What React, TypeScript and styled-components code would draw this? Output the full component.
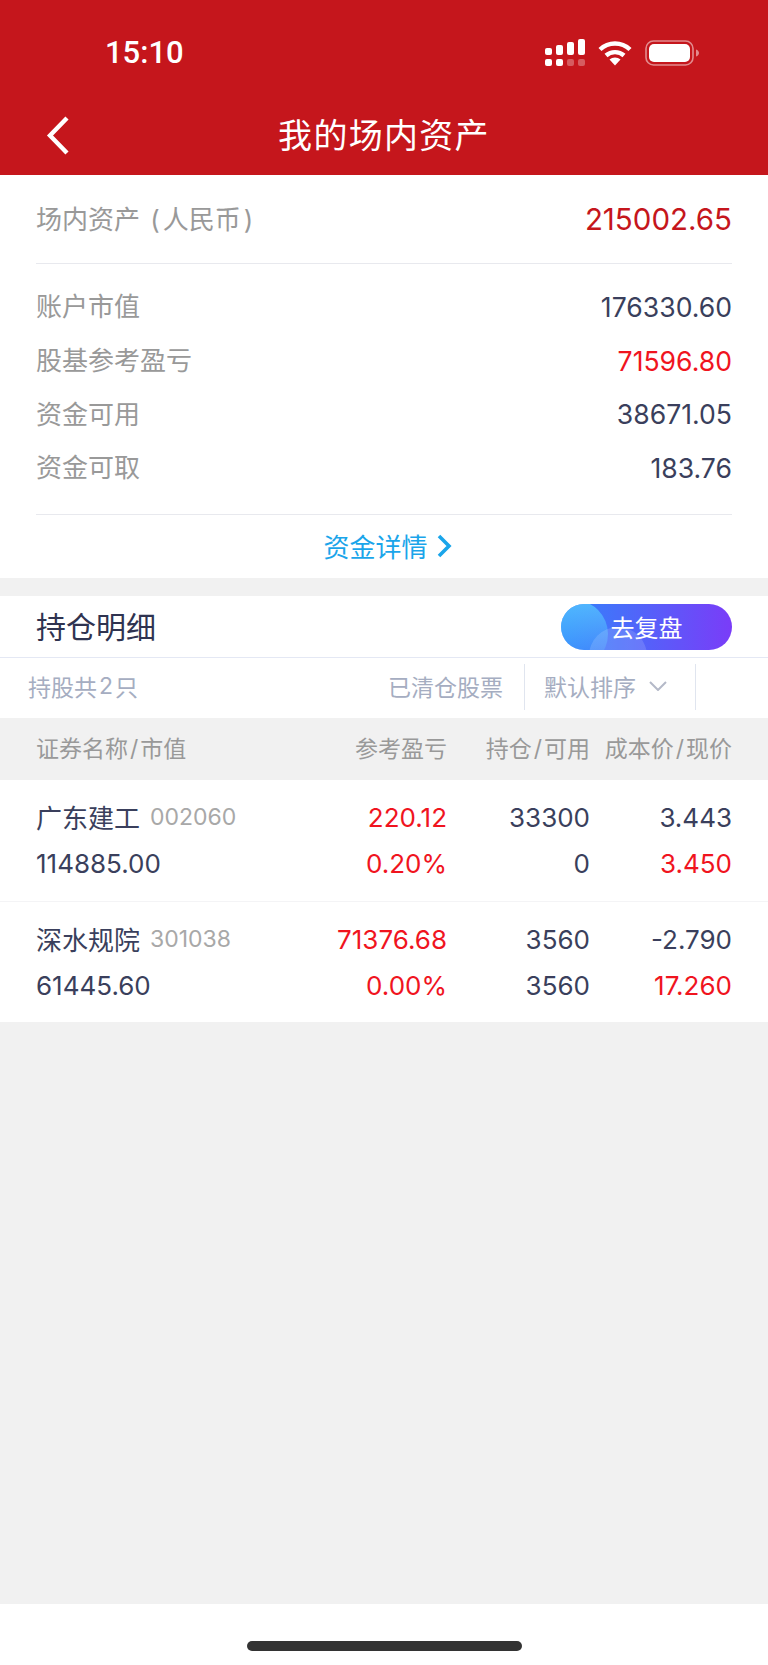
import React from 'react';
import styled, { createGlobalStyle } from 'styled-components';

const red = '#c5161c';
const rise = '#f0141e';
const ink = '#3a3f5c';
const muted = '#999999';
const hairline = '#e8e9ee';

const GlobalStyle = createGlobalStyle`
  html, body {
    margin: 0;
    padding: 0;
    background: #f1f1f1;
  }
  body {
    font-family: Inter, "Noto Sans CJK SC", sans-serif;
    -webkit-font-smoothing: antialiased;
  }
  * {
    box-sizing: border-box;
  }
`;

const Page = styled.div`
  width: 768px;
  height: 1665px;
  display: flex;
  flex-direction: column;
  background: #f1f1f1;
`;

const Header = styled.header`
  height: 175px;
  background: ${red};
  color: #fff;
  display: flex;
  flex-direction: column;
`;

const StatusBar = styled.div`
  height: 96px;
  padding: 9px 68px 0 105px;
  display: flex;
  align-items: center;
  justify-content: space-between;
`;

const Clock = styled.span`
  font-family: Roboto, sans-serif;
  font-size: 31px;
  font-weight: 500;
`;

const StatusIcons = styled.div`
  display: flex;
  align-items: center;
  gap: 13px;
`;

const NavBar = styled.div`
  flex: 1;
  position: relative;
  display: flex;
  align-items: center;
  justify-content: center;
  padding-bottom: 4px;
`;

const BackIcon = styled.svg`
  position: absolute;
  left: 45px;
  top: 19px;
`;

const NavTitle = styled.h1`
  margin: 0;
  font-size: 34px;
  font-weight: 400;
  letter-spacing: 1.3px;
`;

const Summary = styled.section`
  background: #fff;
  padding: 0 36px;
  height: 403px;
  display: flex;
  flex-direction: column;
`;

const TotalRow = styled.div`
  height: 89px;
  border-bottom: 1px solid ${hairline};
  display: flex;
  align-items: center;
  justify-content: space-between;
  font-size: 26px;
  color: ${muted};
`;

// CJK glyphs sit low in their line box, so labels get a little bottom padding
const RowLabel = styled.span`
  padding-bottom: 4px;
`;

const Paren = styled.span`
  margin: 0 3px;
`;

const TotalValue = styled.span`
  font-size: 29.5px;
  color: ${red};
`;

const Metrics = styled.div`
  height: 251px;
  border-bottom: 1px solid ${hairline};
  padding-top: 16px;
  display: flex;
  flex-direction: column;
`;

const MetricRow = styled.div`
  height: 53.7px;
  display: flex;
  align-items: center;
  justify-content: space-between;
  font-size: 26px;
  color: ${muted};
`;

const MetricValue = styled.span<{ $up?: boolean }>`
  font-size: 26.6px;
  color: ${(p) => (p.$up ? rise : ink)};
`;

const DetailLink = styled.a`
  flex: 1;
  display: flex;
  align-items: center;
  justify-content: center;
  gap: 8px;
  font-size: 26px;
  color: #1aa5ea;
  padding: 0 0 2px 7px;
`;

const Holdings = styled.section`
  margin-top: 18px;
  background: #fff;
`;

const HoldingsHead = styled.div`
  height: 62px;
  padding: 0 36px;
  border-bottom: 1px solid #e4e8f4;
  display: flex;
  align-items: center;
  justify-content: space-between;
`;

const HoldingsTitle = styled.h2`
  margin: 0;
  padding-bottom: 3px;
  font-size: 30px;
  font-weight: 400;
  color: #2f3350;
`;

const ReviewButton = styled.button`
  position: relative;
  overflow: hidden;
  width: 171px;
  height: 46px;
  padding: 0;
  border: 0;
  border-radius: 23px;
  background: linear-gradient(90deg, #2f86fb 0%, #7a3cf8 100%);
  color: #fff;
  font: inherit;
  font-size: 24px;

  &::before,
  &::after {
    content: '';
    position: absolute;
    border-radius: 50%;
  }
  &::before {
    left: -21px;
    top: -4px;
    width: 68px;
    height: 68px;
    background: linear-gradient(180deg, rgba(88, 200, 255, 0.8), rgba(60, 130, 255, 0.15));
  }
  &::after {
    left: 28px;
    top: 23px;
    width: 58px;
    height: 58px;
    background: rgba(255, 255, 255, 0.14);
  }
`;

const ReviewLabel = styled.span`
  position: relative;
  z-index: 1;
`;

const Toolbar = styled.div`
  height: 60px;
  padding: 6px 0 8px 28px;
  display: flex;
  align-items: stretch;
  font-size: 23px;
  color: #a5adc1;
`;

const ToolbarCount = styled.span`
  flex: 1;
  display: flex;
  align-items: center;
  padding-bottom: 2px;
`;

const CountNumber = styled.span`
  margin: 0 2px;
`;

const ToolbarLink = styled.span`
  display: flex;
  align-items: center;
  padding: 0 21px 2px 0;
`;

const SortControl = styled.span`
  width: 172px;
  margin-right: 72px;
  padding: 0 0 2px 19px;
  border-left: 1px solid #e0e5ef;
  border-right: 1px solid #e0e5ef;
  display: flex;
  align-items: center;
  gap: 13px;
`;

const TableGrid = styled.div`
  display: grid;
  grid-template-columns: 1fr 120px 143px 142px;
  padding: 0 36px;
`;

const TableHead = styled(TableGrid)`
  height: 62px;
  background: #f1f1f1;
  align-items: center;
  font-size: 23px;
  color: ${muted};
`;

const HeadCell = styled.span<{ $left?: boolean }>`
  padding-bottom: 4px;
  text-align: ${(p) => (p.$left ? 'left' : 'right')};
  white-space: nowrap;
`;

const Slash = styled.span`
  margin: 0 2px;
`;

const Rows = styled.div`
  background: #fff;
`;

const StockRow = styled(TableGrid)`
  height: 121px;
  padding-top: 14px;
  grid-auto-rows: 46.5px;
  align-items: center;
  font-size: 26px;
  color: ${ink};

  & + & {
    border-top: 1px solid #f4f4f6;
  }
`;

const NameCell = styled.span`
  display: flex;
  align-items: center;
  gap: 10px;
  white-space: nowrap;
`;

const StockName = styled.span`
  padding-bottom: 2px;
`;

const StockCode = styled.span`
  font-size: 23px;
  color: #a8a8a8;
`;

const NumCell = styled.span<{ $up?: boolean }>`
  text-align: right;
  color: ${(p) => (p.$up ? rise : 'inherit')};
`;

const Spacer = styled.div`
  flex: 1;
`;

const HomeBar = styled.footer`
  height: 61px;
  background: #fff;
  display: flex;
  justify-content: center;
  padding-top: 37px;
`;

const HomeIndicator = styled.div`
  width: 275px;
  height: 10px;
  border-radius: 5px;
  background: #333;
`;

const SignalIcon = () => (
  <svg width="40" height="28" viewBox="0 0 40 28" fill="#fff">
    <rect x="0" y="9" width="7" height="7" rx="2" />
    <rect x="11" y="6" width="7" height="10" rx="2" />
    <rect x="22" y="3" width="7" height="13" rx="2" />
    <rect x="33" y="0" width="7" height="16" rx="2" />
    <rect x="0" y="20" width="7" height="7" rx="2" />
    <rect x="11" y="20" width="7" height="7" rx="2" />
    <rect x="22" y="20" width="7" height="7" rx="2" opacity="0.3" />
    <rect x="33" y="20" width="7" height="7" rx="2" opacity="0.3" />
  </svg>
);

const WifiIcon = () => (
  <svg width="34" height="26" viewBox="0 0 34 26" fill="none" stroke="#fff" strokeWidth="4.4">
    <path d="M2 9.5C10.5 1.5 23.5 1.5 32 9.5" />
    <path d="M8 15.5C13 11 21 11 26 15.5" />
    <path d="M11.5 19.6 17 25.4 22.5 19.6C19.5 16.8 14.5 16.8 11.5 19.6Z" fill="#fff" stroke="none" />
  </svg>
);

const BatteryIcon = () => (
  <svg width="55" height="26" viewBox="0 0 55 26" fill="none">
    <rect x="1" y="1" width="47" height="24" rx="7.5" stroke="#fff" strokeOpacity="0.5" strokeWidth="1.6" />
    <rect x="4" y="4" width="41" height="18" rx="5" fill="#fff" />
    <path d="M51 9.5c2 .6 3 2 3 3.5s-1 2.9-3 3.5z" fill="#fff" fillOpacity="0.5" />
  </svg>
);

const metrics = [
  { label: '账户市值', value: '176330.60' },
  { label: '股基参考盈亏', value: '71596.80', up: true },
  { label: '资金可用', value: '38671.05' },
  { label: '资金可取', value: '183.76' },
];

const stocks = [
  {
    name: '广东建工',
    code: '002060',
    marketValue: '114885.00',
    profit: '220.12',
    ratio: '0.20%',
    held: '33300',
    available: '0',
    cost: '3.443',
    price: '3.450',
  },
  {
    name: '深水规院',
    code: '301038',
    marketValue: '61445.60',
    profit: '71376.68',
    ratio: '0.00%',
    held: '3560',
    available: '3560',
    cost: '-2.790',
    price: '17.260',
  },
];

export default function App() {
  return (
    <Page>
      <GlobalStyle />
      <Header>
        <StatusBar>
          <Clock>15:10</Clock>
          <StatusIcons>
            <SignalIcon />
            <WifiIcon />
            <BatteryIcon />
          </StatusIcons>
        </StatusBar>
        <NavBar>
          <BackIcon width="26" height="40" viewBox="0 0 26 40" fill="none" stroke="#fff" strokeWidth="4.4">
            <path d="M22 3 5 20.5 22 38" />
          </BackIcon>
          <NavTitle>我的场内资产</NavTitle>
        </NavBar>
      </Header>

      <Summary>
        <TotalRow>
          <RowLabel>
            场内资产 <Paren>(</Paren>人民币<Paren>)</Paren>
          </RowLabel>
          <TotalValue>215002.65</TotalValue>
        </TotalRow>
        <Metrics>
          {metrics.map((m) => (
            <MetricRow key={m.label}>
              <RowLabel>{m.label}</RowLabel>
              <MetricValue $up={m.up}>{m.value}</MetricValue>
            </MetricRow>
          ))}
        </Metrics>
        <DetailLink>
          资金详情
          <svg width="16" height="24" viewBox="0 0 16 24" fill="none" stroke="#1aa5ea" strokeWidth="3.6">
            <path d="M3 2 13 12 3 22" />
          </svg>
        </DetailLink>
      </Summary>

      <Holdings>
        <HoldingsHead>
          <HoldingsTitle>持仓明细</HoldingsTitle>
          <ReviewButton>
            <ReviewLabel>去复盘</ReviewLabel>
          </ReviewButton>
        </HoldingsHead>
        <Toolbar>
          <ToolbarCount>
            持股共<CountNumber>2</CountNumber>只
          </ToolbarCount>
          <ToolbarLink>已清仓股票</ToolbarLink>
          <SortControl>
            默认排序
            <svg width="18" height="10" viewBox="0 0 18 10" fill="none" stroke="#b4b9c8" strokeWidth="2">
              <path d="M1 1 9 9 17 1" />
            </svg>
          </SortControl>
        </Toolbar>
        <TableHead>
          <HeadCell $left>
            证券名称<Slash>/</Slash>市值
          </HeadCell>
          <HeadCell>参考盈亏</HeadCell>
          <HeadCell>
            持仓<Slash>/</Slash>可用
          </HeadCell>
          <HeadCell>
            成本价<Slash>/</Slash>现价
          </HeadCell>
        </TableHead>
        <Rows>
          {stocks.map((s) => (
            <StockRow key={s.code}>
              <NameCell>
                <StockName>{s.name}</StockName>
                <StockCode>{s.code}</StockCode>
              </NameCell>
              <NumCell $up>{s.profit}</NumCell>
              <NumCell>{s.held}</NumCell>
              <NumCell>{s.cost}</NumCell>
              <NameCell>{s.marketValue}</NameCell>
              <NumCell $up>{s.ratio}</NumCell>
              <NumCell>{s.available}</NumCell>
              <NumCell $up>{s.price}</NumCell>
            </StockRow>
          ))}
        </Rows>
      </Holdings>

      <Spacer />
      <HomeBar>
        <HomeIndicator />
      </HomeBar>
    </Page>
  );
}
